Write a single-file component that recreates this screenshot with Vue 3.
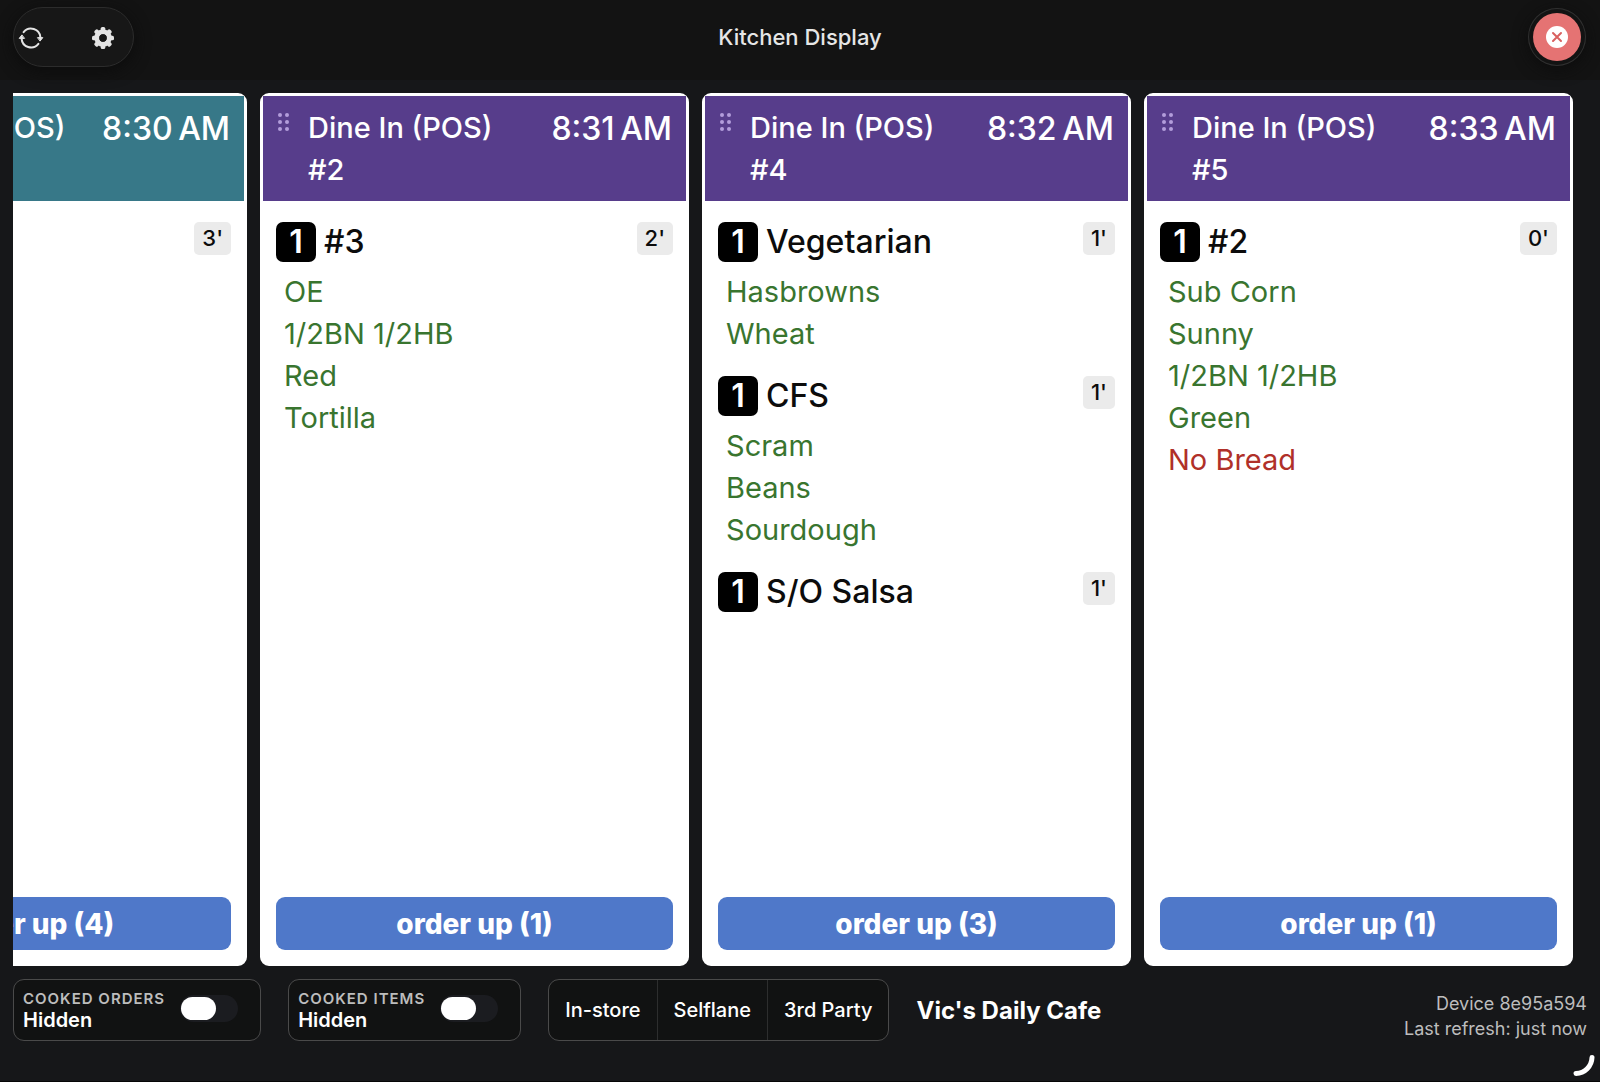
<script setup>
import { ref } from 'vue'

const orders = ref([
  {
    id: 1,
    source: 'Takeout (POS) #1',
    time: '8:30\u202fAM',
    color: 'teal',
    items: [{ qty: 1, name: '', age: 3, mods: [] }],
    count: 4
  },
  {
    id: 2,
    source: 'Dine In (POS) #2',
    time: '8:31\u202fAM',
    color: 'purple',
    items: [
      {
        qty: 1,
        name: '#3',
        age: 2,
        mods: [{ text: 'OE' }, { text: '1/2BN 1/2HB' }, { text: 'Red' }, { text: 'Tortilla' }]
      }
    ],
    count: 1
  },
  {
    id: 4,
    source: 'Dine In (POS) #4',
    time: '8:32\u202fAM',
    color: 'purple',
    items: [
      { qty: 1, name: 'Vegetarian', age: 1, mods: [{ text: 'Hasbrowns' }, { text: 'Wheat' }] },
      { qty: 1, name: 'CFS', age: 1, mods: [{ text: 'Scram' }, { text: 'Beans' }, { text: 'Sourdough' }] },
      { qty: 1, name: 'S/O Salsa', age: 1, mods: [] }
    ],
    count: 3
  },
  {
    id: 5,
    source: 'Dine In (POS) #5',
    time: '8:33\u202fAM',
    color: 'purple',
    items: [
      {
        qty: 1,
        name: '#2',
        age: 0,
        mods: [
          { text: 'Sub Corn' },
          { text: 'Sunny' },
          { text: '1/2BN 1/2HB' },
          { text: 'Green' },
          { text: 'No Bread', remove: true }
        ]
      }
    ],
    count: 1
  }
])

const sources = ['In-store', 'Selflane', '3rd Party']
const showCookedOrders = ref(false)
const showCookedItems = ref(false)

function orderUp(id) {
  orders.value = orders.value.filter((o) => o.id !== id)
}
</script>

<template>
  <div class="kds">
    <header class="topbar">
      <div class="tools">
        <button type="button" aria-label="Refresh">
          <svg width="26" height="26" viewBox="0 0 26 26" fill="none" stroke="#e4e4e4" stroke-width="2" stroke-linecap="round">
            <path d="M5.6 7.2A9.4 9.4 0 0 1 22.4 12.4" />
            <path d="M20.4 18.8A9.4 9.4 0 0 1 3.6 13.6" />
            <path d="M19.8 12.6h5l-2.5 3.2zM6.2 13.4h-5l2.5-3.2z" fill="#e4e4e4" stroke-linejoin="round" stroke-width="1" />
          </svg>
        </button>
        <button type="button" aria-label="Settings">
          <svg width="24" height="24" viewBox="0 0 24 24" fill="#e4e4e4">
            <g>
              <rect v-for="n in 8" :key="n" x="9.7" y="1" width="4.6" height="7" rx="1.6" :transform="`rotate(${n * 45} 12 12)`" />
            </g>
            <circle cx="12" cy="12" r="6.2" fill="none" stroke="#e4e4e4" stroke-width="5" />
            <circle cx="12" cy="12" r="3.7" fill="#171717" />
          </svg>
        </button>
      </div>
      <h1>Kitchen Display</h1>
      <button type="button" class="close" aria-label="Close">
        <svg width="24" height="24" viewBox="0 0 24 24">
          <circle cx="12" cy="12" r="11" fill="#fff" />
          <path d="M8 8l8 8M16 8l-8 8" stroke="#d9605f" stroke-width="2" stroke-linecap="round" />
        </svg>
      </button>
    </header>

    <main class="board">
      <article v-for="order in orders" :key="order.id" class="ticket">
        <div class="ticket-head" :class="order.color">
          <svg class="grip" width="12" height="20" viewBox="0 0 12 20" fill="currentColor">
            <circle cx="2" cy="3" r="2" /><circle cx="9" cy="3" r="2" />
            <circle cx="2" cy="10" r="2" /><circle cx="9" cy="10" r="2" />
            <circle cx="2" cy="17" r="2" /><circle cx="9" cy="17" r="2" />
          </svg>
          <h2>{{ order.source }}</h2>
          <time>{{ order.time }}</time>
        </div>
        <div class="ticket-body">
          <section v-for="(item, i) in order.items" :key="i" class="item">
            <div class="item-row">
              <span class="qty">{{ item.qty }}</span>
              <h3>{{ item.name }}</h3>
              <span class="age">{{ item.age }}'</span>
            </div>
            <ul v-if="item.mods.length">
              <li v-for="mod in item.mods" :key="mod.text" :class="{ remove: mod.remove }">{{ mod.text }}</li>
            </ul>
          </section>
        </div>
        <button type="button" class="order-up" @click="orderUp(order.id)">order up ({{ order.count }})</button>
      </article>
    </main>

    <footer class="bottombar">
      <label class="toggle">
        <span class="toggle-text">
          <small>Cooked orders</small>
          <b>{{ showCookedOrders ? 'Shown' : 'Hidden' }}</b>
        </span>
        <input v-model="showCookedOrders" type="checkbox" role="switch" />
      </label>
      <label class="toggle">
        <span class="toggle-text">
          <small>Cooked items</small>
          <b>{{ showCookedItems ? 'Shown' : 'Hidden' }}</b>
        </span>
        <input v-model="showCookedItems" type="checkbox" role="switch" />
      </label>
      <div class="segments">
        <button v-for="s in sources" :key="s" type="button">{{ s }}</button>
      </div>
      <strong class="store">Vic's Daily Cafe</strong>
      <p class="device">Device 8e95a594<br />Last refresh: just now</p>
    </footer>

    <svg class="spinner" width="24" height="24" viewBox="0 0 24 24" fill="none" stroke="#fff" stroke-width="5" stroke-linecap="round">
      <path d="M20 3.5A16.5 16.5 0 0 1 4 19.5" />
    </svg>
  </div>
</template>

<style>
body {
  margin: 0;
  background: #161719;
}
</style>

<style scoped>
.kds {
  position: relative;
  box-sizing: border-box;
  display: flex;
  flex-direction: column;
  min-height: 100vh;
  padding-bottom: 40px;
  background: #161719;
  border-bottom: 1px solid #060606;
  color: #fff;
  font-family: Inter, Roboto, sans-serif;
}
button {
  margin: 0;
  padding: 0;
  border: 0;
  background: none;
  color: inherit;
  font-family: inherit;
  cursor: pointer;
}
svg {
  display: block;
}
h1, h2, h3, ul, p {
  margin: 0;
  padding: 0;
}

/* top bar */
.topbar {
  display: grid;
  grid-template-columns: 1fr auto 1fr;
  align-items: center;
  height: 80px;
  box-sizing: border-box;
  padding: 0 13px 6px;
  background: #131313;
}
.tools {
  display: flex;
  justify-self: start;
  align-items: center;
  gap: 47px;
  box-sizing: border-box;
  height: 60px;
  padding: 2px 18px 0 4px;
  border: 1px solid #2c2c2c;
  border-radius: 30px;
  background: #171717;
  box-shadow: 0 4px 16px #0c0c0c;
}
h1 {
  font-size: 22px;
  font-weight: 500;
  color: #e6e6e6;
}
.close {
  display: flex;
  justify-self: end;
  align-items: center;
  justify-content: center;
  width: 48px;
  height: 48px;
  margin-right: 6px;
  border-radius: 50%;
  background: #e57373;
  box-shadow: 0 0 0 4px #131313, 0 0 0 5px #303030, 0 4px 16px 4px #0c0c0c;
}

/* tickets */
.board {
  flex: 1;
  display: flex;
  justify-content: flex-end;
  gap: 13px;
  margin: 13px 0 13px 13px;
  padding-right: 27px;
  overflow: hidden;
}
.ticket {
  flex: 0 0 calc((100% - 273px) / 3);
  display: flex;
  flex-direction: column;
  box-sizing: border-box;
  border: 3px solid #fff;
  border-radius: 9px;
  background: #fff;
  color: #0c0c0c;
}
.ticket-head {
  display: flex;
  align-items: flex-start;
  padding: 11px 14px 10px 15px;
  color: #fff;
}
.ticket-head.teal {
  background: #377888;
}
.ticket-head.purple {
  background: #573d8b;
}
.grip {
  flex: none;
  margin: 5px 18px 0 0;
  color: #b39ddb;
}
.ticket-head h2 {
  flex: 1;
  max-width: 210px;
  font-size: 29px;
  font-weight: 500;
  line-height: 42px;
}
.ticket-head time {
  margin-left: auto;
  font-size: 32px;
  font-weight: 500;
  line-height: 44px;
  white-space: nowrap;
}
.ticket-body {
  flex: 1;
  display: flex;
  flex-direction: column;
  gap: 21px;
  padding: 21px 13px;
}
.item-row {
  display: flex;
  align-items: flex-start;
  gap: 8px;
}
.qty {
  width: 40px;
  height: 40px;
  border-radius: 7px;
  background: #000;
  color: #fff;
  font-size: 32px;
  font-weight: 600;
  line-height: 40px;
  text-align: center;
}
h3 {
  flex: 1;
  font-size: 32px;
  font-weight: 500;
  line-height: 40px;
}
.age {
  padding: 0 8px;
  border-radius: 5px;
  background: #ebebeb;
  font-size: 22px;
  font-weight: 500;
  line-height: 33px;
}
ul {
  margin-top: 9px;
  padding-left: 8px;
  list-style: none;
}
li {
  color: #39752f;
  font-size: 29px;
  line-height: 42px;
}
li.remove {
  color: #b03029;
}
.order-up {
  height: 53px;
  margin: 0 13px 13px;
  border-radius: 9px;
  background: #4f78c9;
  color: #fff;
  font-size: 28px;
  font-weight: 800;
}

/* bottom bar */
.bottombar {
  display: flex;
  align-items: stretch;
  gap: 27px;
  min-height: 61px;
  padding: 0 13px;
}
.toggle {
  display: flex;
  align-items: center;
  gap: 15px;
  padding: 0 22px 0 9px;
  border: 1px solid #4a4a4a;
  border-radius: 11px;
  background: #111212;
}
.toggle-text {
  display: flex;
  flex-direction: column;
}
.toggle small {
  color: #bdbdbd;
  font-size: 15px;
  font-weight: 600;
  line-height: 20px;
  letter-spacing: 1px;
  text-transform: uppercase;
}
.toggle b {
  font-size: 20px;
  font-weight: 600;
  line-height: 22px;
}
.toggle input {
  appearance: none;
  display: flex;
  align-items: center;
  box-sizing: border-box;
  width: 58px;
  height: 27px;
  margin: 0 0 4px;
  padding: 0 1px;
  border-radius: 14px;
  background: #1b1c20;
}
.toggle input::before {
  content: '';
  width: 35px;
  height: 23px;
  border-radius: 12px;
  background: #fff;
}
.toggle input:checked {
  justify-content: flex-end;
  background: #34a853;
}
.segments {
  display: flex;
  border: 1px solid #4a4a4a;
  border-radius: 11px;
  background: #111212;
}
.segments button {
  padding: 0 16px;
  font-size: 20px;
  font-weight: 500;
}
.segments button + button {
  border-left: 1px solid #2d2e2e;
}
.store {
  align-self: center;
  font-size: 24px;
  font-weight: 700;
}
.device {
  align-self: center;
  margin-left: auto;
  padding-top: 12px;
  color: #bdbdbd;
  font-size: 18px;
  line-height: 25px;
  text-align: right;
}
.spinner {
  position: absolute;
  right: 4px;
  bottom: 3px;
}
</style>
